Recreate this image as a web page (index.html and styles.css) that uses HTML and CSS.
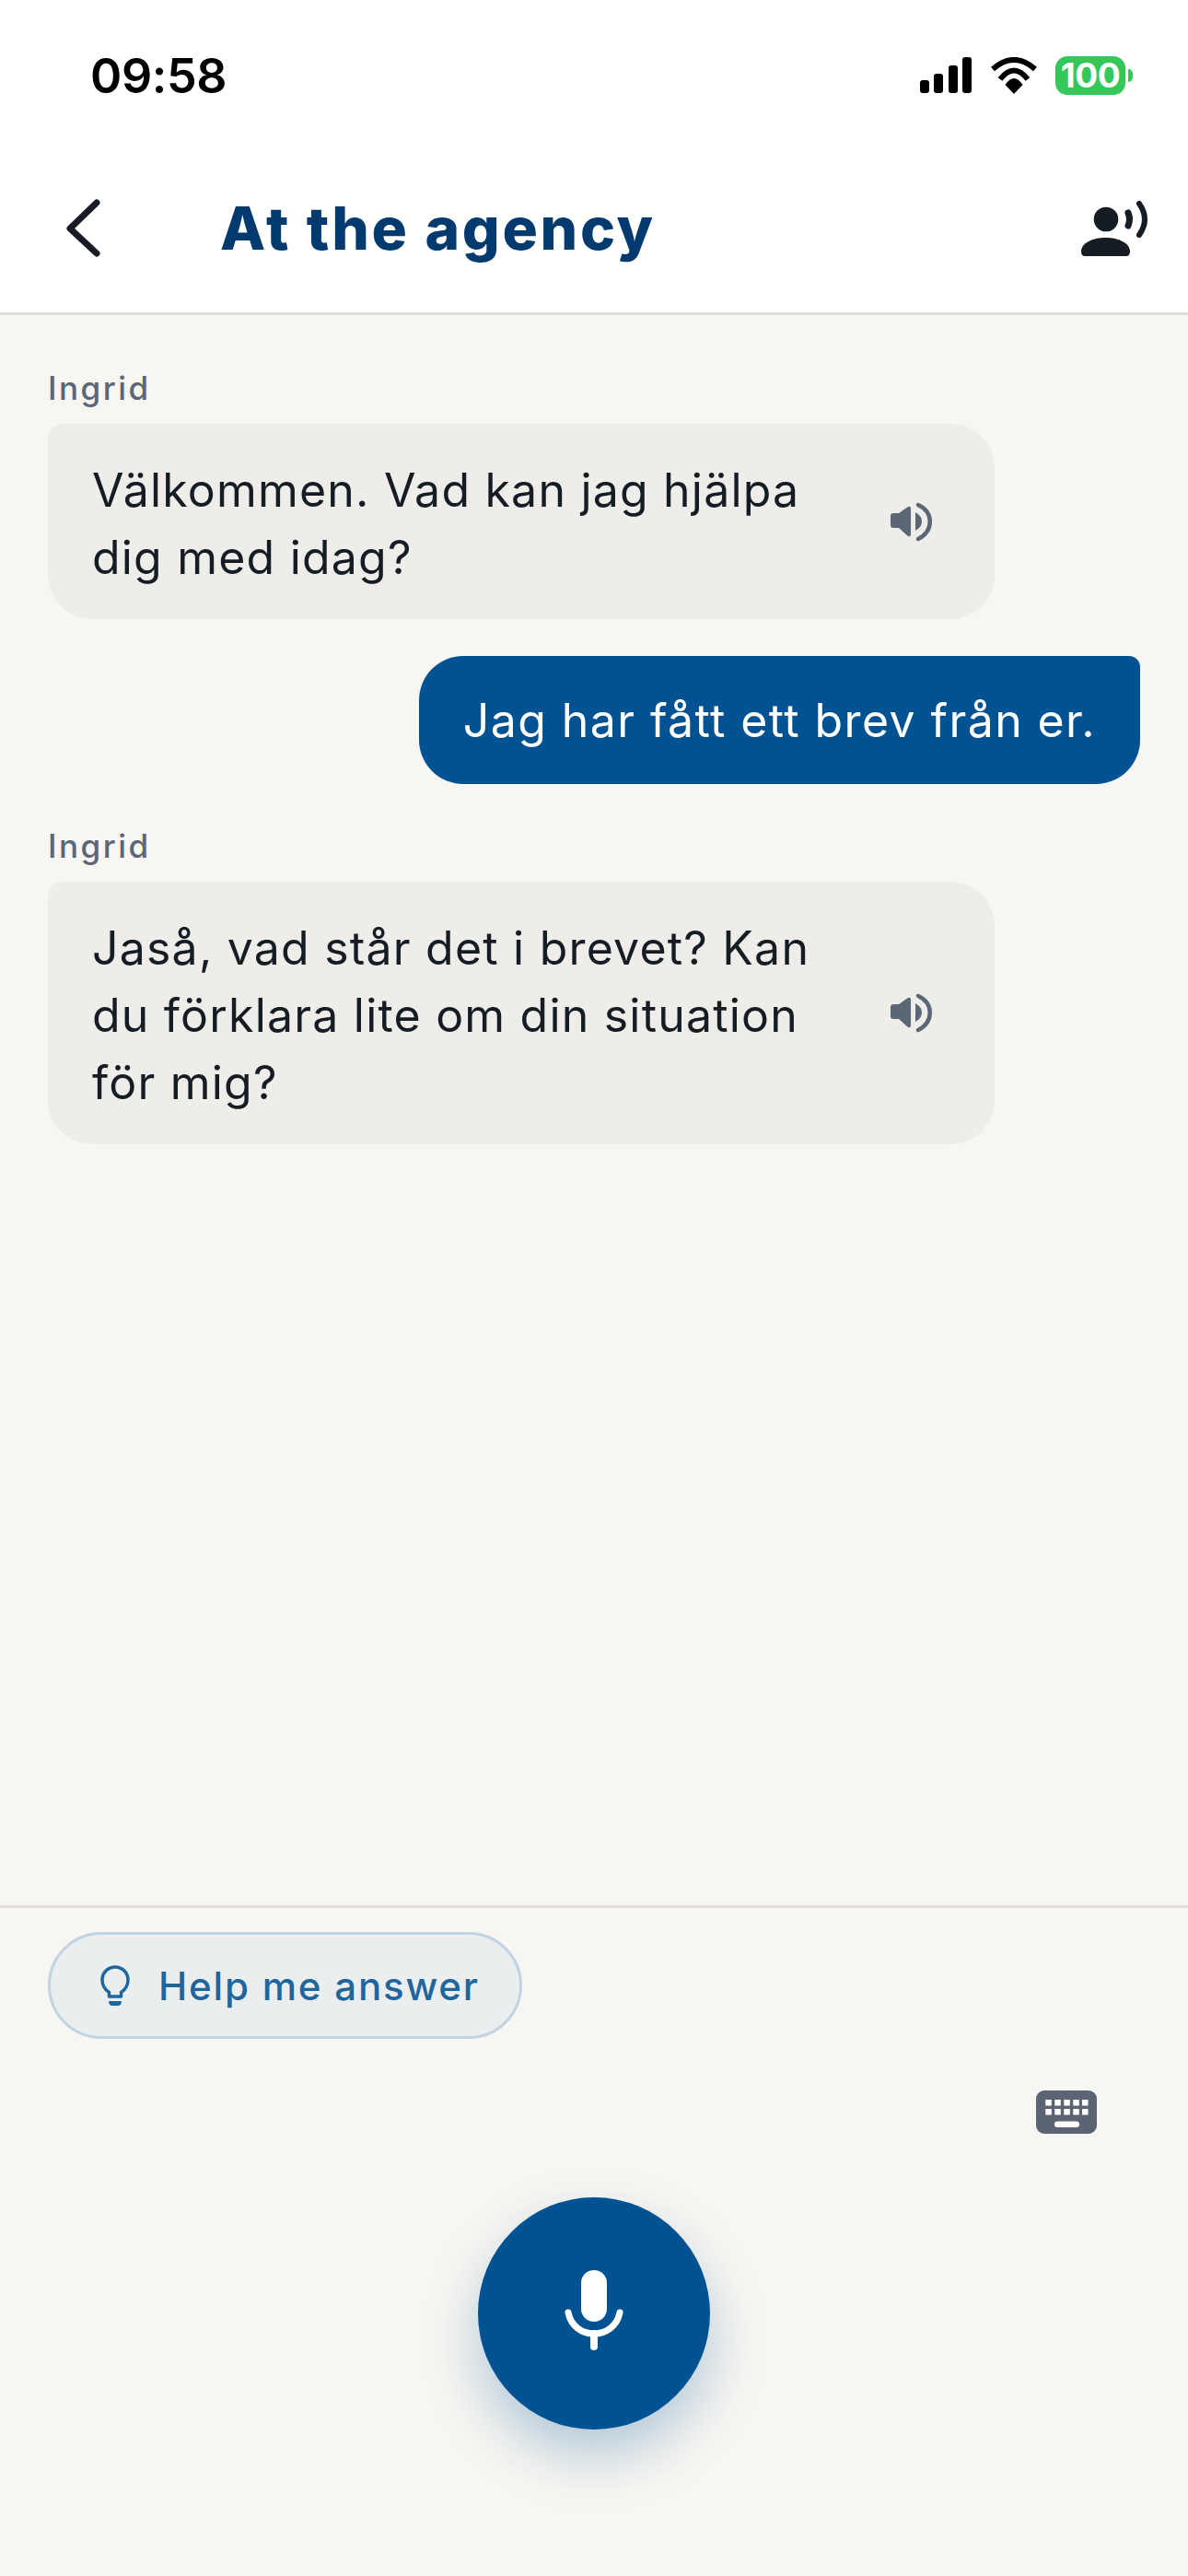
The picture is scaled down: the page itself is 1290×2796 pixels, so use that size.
FILE: index.html
```html
<!DOCTYPE html>
<html>
	<head>
		<meta charset="utf-8">
		<title>At the agency</title>
		<link rel="stylesheet" href="styles.css">
	</head>
	<body>
		<div class="page">
			<div class="status">
				<span class="time">09:58</span>
				<div class="status_icons">
					<svg class="signal" width="58" height="40" viewBox="0 0 58 40">
						<rect x="1" y="25" width="10" height="14" rx="3"/>
						<rect x="16" y="18" width="10" height="21" rx="3"/>
						<rect x="32" y="9" width="10" height="30" rx="3"/>
						<rect x="47" y="0" width="10" height="39" rx="3"/>
					</svg>
					<svg class="wifi" width="54" height="40" viewBox="0 0 54 40">
						<path d="M4 13 Q27 -7 50 13" fill="none" stroke="#000" stroke-width="6"/>
						<path d="M12 24 Q27 5 42 24" fill="none" stroke="#000" stroke-width="6"/>
						<path d="M27 40 L17.500 30 Q27 16 36.500 30 Z"/>
					</svg>
					<div class="battery">
						<span class="battery_level">100</span>
						<span class="battery_nub"></span>
					</div>
				</div>
			</div>

			<div class="header">
				<svg class="back" width="40" height="66" viewBox="0 0 40 66">
					<path d="M35 5 L6 33 L35 60" fill="none" stroke="#161c24" stroke-width="7" stroke-linecap="round" stroke-linejoin="round"/>
				</svg>
				<span class="title">At the agency</span>
				<svg class="voice" width="76" height="66" viewBox="0 0 76 66">
					<circle cx="27" cy="23" r="13.300"/>
					<path d="M0 58 C0 49 12 43 26.500 43 C41 43 53 49 53 58 Q53 63 49 63 H4 Q0 63 0 58 Z"/>
					<path d="M51 16 Q54 23 51 30" fill="none" stroke="#161c24" stroke-width="7" stroke-linecap="round"/>
					<path d="M63 6 Q75 23 63 40" fill="none" stroke="#161c24" stroke-width="6" stroke-linecap="round"/>
				</svg>
			</div>

			<div class="chat">
				<div class="group">
					<div class="name">Ingrid</div>
					<div class="bubble">
						<div class="bubble_text">Välkommen. Vad kan jag hjälpa dig med idag?</div>
						<svg class="speaker" width="50" height="45" viewBox="0 0 50 45">
							<path d="M5 13 H11 L21 6 Q24 5 24 8 V36 Q24 39 21 38 L11 29 H5 Q2 29 2 26 V16 Q2 13 5 13 Z"/>
							<path d="M29 12 Q36 16 36 22 Q36 28 29 32 Z"/>
							<path d="M32 4 C49 12 49 32 32 41" fill="none" stroke="#5b6676" stroke-width="4.500" stroke-linecap="round"/>
						</svg>
					</div>
				</div>

				<div class="user_bubble">Jag har fått ett brev från er.</div>

				<div class="group">
					<div class="name">Ingrid</div>
					<div class="bubble">
						<div class="bubble_text">Jaså, vad står det i brevet? Kan du förklara lite om din situation för mig?</div>
						<svg class="speaker" width="50" height="45" viewBox="0 0 50 45">
							<path d="M5 13 H11 L21 6 Q24 5 24 8 V36 Q24 39 21 38 L11 29 H5 Q2 29 2 26 V16 Q2 13 5 13 Z"/>
							<path d="M29 12 Q36 16 36 22 Q36 28 29 32 Z"/>
							<path d="M32 4 C49 12 49 32 32 41" fill="none" stroke="#5b6676" stroke-width="4.500" stroke-linecap="round"/>
						</svg>
					</div>
				</div>
			</div>

			<div class="footer">
				<div class="help">
					<svg class="bulb" width="36" height="46" viewBox="0 0 36 46">
						<path d="M11.500 35 H24.500 V30.500 C29 27.500 32 24 32 17 A14 14 0 0 0 4 17 C4 24 7 27.500 11.500 30.500 Z" fill="none" stroke="#1f659e" stroke-width="3.500" stroke-linejoin="round"/>
						<path d="M11 40 H25 Q25 45 21 45 H15 Q11 45 11 40 Z" fill="#1f659e"/>
					</svg>
					<span>Help me answer</span>
				</div>
				<div class="keyboard_row">
					<svg width="66" height="47" viewBox="0 0 66 47">
						<rect width="66" height="47" rx="9" fill="#5a6473"/>
						<g fill="#fff">
							<rect x="10.300" y="10" width="6.500" height="6.500"/>
							<rect x="20.300" y="10" width="6.500" height="6.500"/>
							<rect x="30.300" y="10" width="6.500" height="6.500"/>
							<rect x="40.300" y="10" width="6.500" height="6.500"/>
							<rect x="50" y="10" width="6.500" height="6.500"/>
							<rect x="10.300" y="20" width="6.500" height="6.500"/>
							<rect x="20.300" y="20" width="6.500" height="6.500"/>
							<rect x="30.300" y="20" width="6.500" height="6.500"/>
							<rect x="40.300" y="20" width="6.500" height="6.500"/>
							<rect x="50" y="20" width="6.500" height="6.500"/>
							<rect x="20" y="33.500" width="27" height="6.500" rx="3.250"/>
						</g>
					</svg>
				</div>
				<div class="mic_row">
					<div class="mic">
						<svg class="mic_icon" width="66" height="96" viewBox="0 0 66 96">
							<rect x="19" y="4" width="28" height="56" rx="14" fill="#fff"/>
							<path d="M5 50 C8 65 20 73 33 73 C46 73 58 65 61 50" fill="none" stroke="#fff" stroke-width="7" stroke-linecap="round"/>
							<path d="M33 73 V87" fill="none" stroke="#fff" stroke-width="8" stroke-linecap="round"/>
						</svg>
					</div>
				</div>
			</div>
		</div>
	</body>
</html>
```

FILE: styles.css
```css
body	{
	margin: 0;
	font-family: "Inter", "Liberation Sans", sans-serif;
	background: #f7f6f2;
}
.page	{
	display: flex;
	flex-direction: column;
	height: 2796px;
	overflow: hidden;
}
.status	{
	display: flex;
	justify-content: space-between;
	align-items: center;
	flex-shrink: 0;
	height: 164px;
	padding: 0 60px 0 98px;
	box-sizing: border-box;
	background: white;
}
.time	{
	font-size: 52px;
	font-weight: 600;
	color: black;
	letter-spacing: -.4px;
}
.status_icons	{
	display: flex;
	align-items: center;
	gap: 18px;
}
.battery	{
	display: flex;
	align-items: center;
	gap: 3px;
}
.battery_level	{
	display: block;
	width: 76px;
	height: 42px;
	line-height: 42px;
	text-align: center;
	font-size: 37px;
	font-weight: 700;
	letter-spacing: -.5px;
	color: white;
	background: #34c759;
	border-radius: 13px;
}
.battery_nub	{
	display: block;
	width: 5px;
	height: 14px;
	background: #34c759;
	border-radius: 0 7px 7px 0;
}
.header	{
	display: flex;
	align-items: center;
	flex-shrink: 0;
	height: 178px;
	padding: 0 40px 8px 70px;
	box-sizing: border-box;
	background: white;
	border-bottom: 3px solid #e0ded7;
}
.back	{
	margin-right: 129px;
}
.title	{
	flex: 1;
	font-size: 64px;
	font-weight: 800;
	letter-spacing: 2.700px;
	color: #003a6e;
}
.voice	{
	fill: #161c24;
}
.chat	{
	flex: 1;
	display: flex;
	flex-direction: column;
	padding: 57px 52px 0;
}
.name	{
	font-size: 35px;
	font-weight: 500;
	line-height: 44px;
	letter-spacing: 2.500px;
	color: #5b6676;
	margin-bottom: 17px;
}
.bubble	{
	display: flex;
	align-items: center;
	width: 1028px;
	box-sizing: border-box;
	padding: 33px 65px 33px 48px;
	background: #eeede9;
	border-radius: 16px 48px 48px 48px;
}
.bubble_text	{
	flex: 1;
	margin-right: 30px;
	padding-top: 3px;
	margin-bottom: -3px;
	font-size: 50px;
	line-height: 73px;
	letter-spacing: 1.200px;
	color: #161c24;
}
.speaker	{
	flex-shrink: 0;
	fill: #5b6676;
}
.user_bubble	{
	align-self: flex-end;
	margin: 40px 0 45px;
	padding: 34px 48px 33px;
	font-size: 50px;
	line-height: 72px;
	letter-spacing: 1.400px;
	color: white;
	background: #005293;
	border-radius: 48px 12px 48px 48px;
}
.footer	{
	flex-shrink: 0;
	height: 728px;
	box-sizing: border-box;
	border-top: 3px solid #e0ded7;
	padding: 26px 52px 0;
}
.help	{
	display: flex;
	align-items: center;
	gap: 29px;
	width: fit-content;
	height: 116px;
	box-sizing: border-box;
	padding: 0 43px 0 52px;
	font-size: 42px;
	font-weight: 500;
	letter-spacing: 1.800px;
	color: #1f659e;
	background: #ebeeee;
	border: 3px solid #c0d3e0;
	border-radius: 58px;
}
.keyboard_row	{
	display: flex;
	justify-content: flex-end;
	padding: 56px 47px 0 0;
}
.mic_row	{
	display: flex;
	justify-content: center;
	margin-top: 69px;
}
.mic	{
	display: flex;
	align-items: center;
	justify-content: center;
	width: 252px;
	height: 252px;
	border-radius: 50%;
	background: #005293;
	box-shadow: 0 28px 60px rgba(0, 82, 147, .28);
}
.mic_icon	{
	margin-bottom: 6px;
}
```
